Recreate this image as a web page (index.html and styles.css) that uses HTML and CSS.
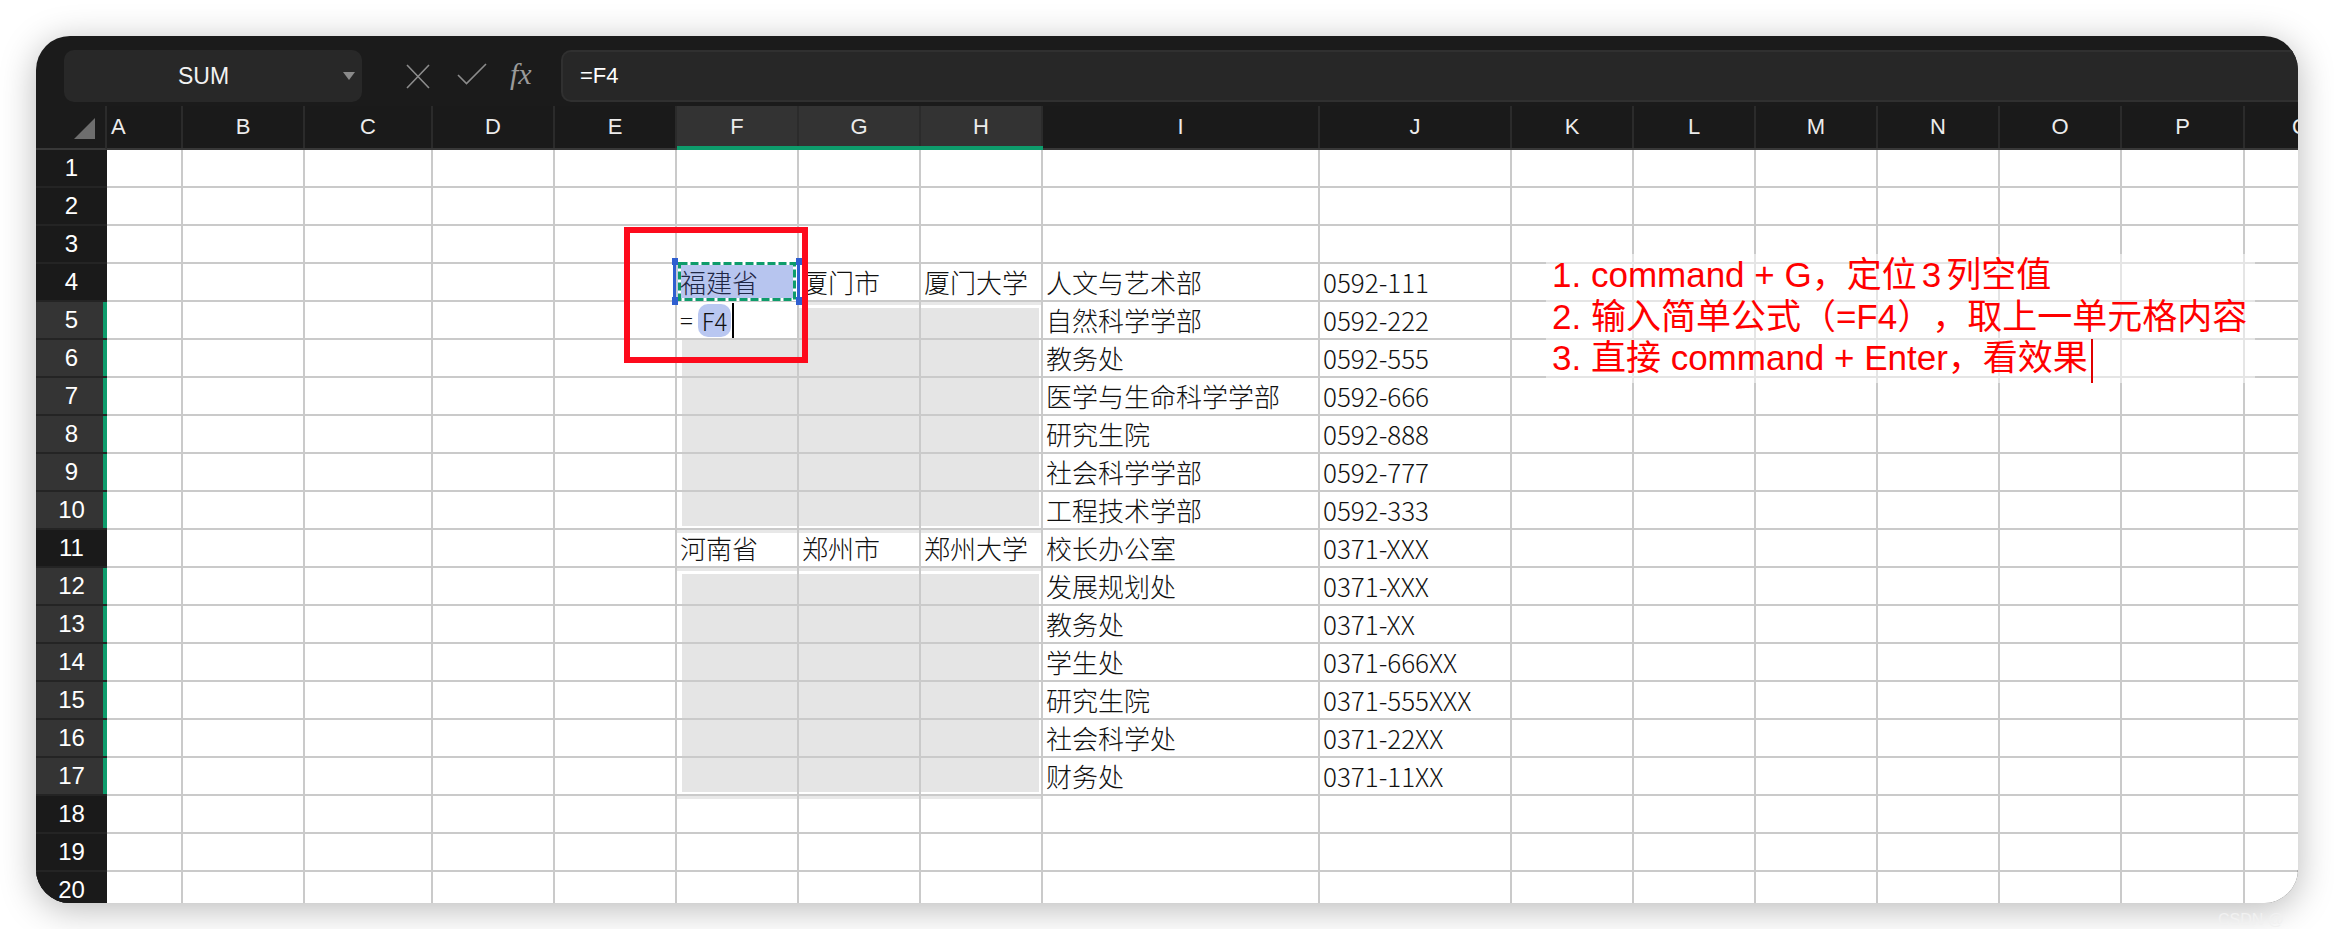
FILE: index.html
```html
<!DOCTYPE html>
<html lang="zh-CN">

<head>
    <meta charset="UTF-8">
    <meta name="viewport" content="width=device-width, initial-scale=1.0">
    <title>Sheet</title>
    <link rel="stylesheet" href="styles.css">
</head>

<body>
    <div class="window">
        <div class="toolbar">
            <div class="namebox">
                <span class="name">SUM</span>
                <span class="arrow"></span>
            </div>
            <svg class="icon-x" width="24" height="25" viewBox="0 0 24 25">
                <path d="M1 1 L23 24 M23 1 L1 24" stroke="#8c8c8c" stroke-width="1.6" fill="none" />
            </svg>
            <svg class="icon-ok" width="30" height="22" viewBox="0 0 30 22">
                <path d="M1 12 L9.5 20.5 L29 1" stroke="#8c8c8c" stroke-width="1.6" fill="none" />
            </svg>
            <span class="fx">fx</span>
            <div class="formula">=F4</div>
        </div>

        <div class="sheet">
            <div class="corner"><span class="tri"></span></div>
            <div class="colheads">
                <div class="first">A</div>
                <div>B</div>
                <div>C</div>
                <div>D</div>
                <div>E</div>
                <div class="on">F</div>
                <div class="on">G</div>
                <div class="on">H</div>
                <div>I</div>
                <div>J</div>
                <div>K</div>
                <div>L</div>
                <div>M</div>
                <div>N</div>
                <div>O</div>
                <div>P</div>
                <div class="last">Q</div>
            </div>
            <div class="rowheads">
                <div>1</div>
                <div>2</div>
                <div>3</div>
                <div>4</div>
                <div class="on">5</div>
                <div class="on">6</div>
                <div class="on">7</div>
                <div class="on">8</div>
                <div class="on">9</div>
                <div class="on">10</div>
                <div>11</div>
                <div class="on">12</div>
                <div class="on">13</div>
                <div class="on">14</div>
                <div class="on">15</div>
                <div class="on">16</div>
                <div class="on">17</div>
                <div>18</div>
                <div>19</div>
                <div>20</div>
            </div>
            <div class="cells">
                <!-- 1 -->
                <div></div><div></div><div></div><div></div><div></div><div></div><div></div><div></div><div></div><div></div><div></div><div></div><div></div><div></div><div></div><div></div><div></div>
                <!-- 2 -->
                <div></div><div></div><div></div><div></div><div></div><div></div><div></div><div></div><div></div><div></div><div></div><div></div><div></div><div></div><div></div><div></div><div></div>
                <!-- 3 -->
                <div></div><div></div><div></div><div></div><div></div><div></div><div></div><div></div><div></div><div></div><div></div><div></div><div></div><div></div><div></div><div></div><div></div>
                <!-- 4 -->
                <div></div><div></div><div></div><div></div><div></div>
                <div class="copy">
                    <svg class="ants" width="130" height="47" viewBox="0 0 130 47">
                        <rect x="5" y="5" width="118" height="37" rx="4" fill="#b7c5ef" />
                        <rect x="1" y="2" width="3" height="43" fill="#2f5fd0" />
                        <rect x="125" y="2" width="3" height="43" fill="#2f5fd0" />
                        <rect x="0" y="0" width="6" height="7" fill="#2f5fd0" />
                        <rect x="124" y="0" width="6" height="7" fill="#2f5fd0" />
                        <rect x="0" y="39" width="6" height="8" fill="#2f5fd0" />
                        <rect x="124" y="39" width="6" height="8" fill="#2f5fd0" />
                        <rect x="7.5" y="5.5" width="115" height="36" fill="none" stroke="#fff" stroke-width="3" />
                        <rect x="7.5" y="5.5" width="115" height="36" fill="none" stroke="#0e9c6b" stroke-width="3" stroke-dasharray="8 3" />
                    </svg>
                    <span>福建省</span>
                </div>
                <div>厦门市</div><div>厦门大学</div><div>人文与艺术部</div><div>0592-111</div>
                <div></div><div></div><div></div><div></div><div></div><div></div><div></div>
                <!-- 5 -->
                <div></div><div></div><div></div><div></div><div></div>
                <div class="edit">=<span class="ref">F4</span><span class="caret"></span></div>
                <div class="sel t"></div><div class="sel t r"></div><div>自然科学学部</div><div>0592-222</div>
                <div></div><div></div><div></div><div></div><div></div><div></div><div></div>
                <!-- 6 -->
                <div></div><div></div><div></div><div></div><div></div>
                <div class="sel l"></div><div class="sel"></div><div class="sel r"></div><div>教务处</div><div>0592-555</div>
                <div></div><div></div><div></div><div></div><div></div><div></div><div></div>
                <!-- 7 -->
                <div></div><div></div><div></div><div></div><div></div>
                <div class="sel l"></div><div class="sel"></div><div class="sel r"></div><div>医学与生命科学学部</div><div>0592-666</div>
                <div></div><div></div><div></div><div></div><div></div><div></div><div></div>
                <!-- 8 -->
                <div></div><div></div><div></div><div></div><div></div>
                <div class="sel l"></div><div class="sel"></div><div class="sel r"></div><div>研究生院</div><div>0592-888</div>
                <div></div><div></div><div></div><div></div><div></div><div></div><div></div>
                <!-- 9 -->
                <div></div><div></div><div></div><div></div><div></div>
                <div class="sel l"></div><div class="sel"></div><div class="sel r"></div><div>社会科学学部</div><div>0592-777</div>
                <div></div><div></div><div></div><div></div><div></div><div></div><div></div>
                <!-- 10 -->
                <div></div><div></div><div></div><div></div><div></div>
                <div class="sel l b"></div><div class="sel b"></div><div class="sel r b"></div><div>工程技术学部</div><div>0592-333</div>
                <div></div><div></div><div></div><div></div><div></div><div></div><div></div>
                <!-- 11 -->
                <div></div><div></div><div></div><div></div><div></div>
                <div class="below">河南省</div><div class="below">郑州市</div><div class="below">郑州大学</div><div>校长办公室</div><div>0371-XXX</div>
                <div></div><div></div><div></div><div></div><div></div><div></div><div></div>
                <!-- 12 -->
                <div></div><div></div><div></div><div></div><div></div>
                <div class="sel l t"></div><div class="sel t"></div><div class="sel t r"></div><div>发展规划处</div><div>0371-XXX</div>
                <div></div><div></div><div></div><div></div><div></div><div></div><div></div>
                <!-- 13 -->
                <div></div><div></div><div></div><div></div><div></div>
                <div class="sel l"></div><div class="sel"></div><div class="sel r"></div><div>教务处</div><div>0371-XX</div>
                <div></div><div></div><div></div><div></div><div></div><div></div><div></div>
                <!-- 14 -->
                <div></div><div></div><div></div><div></div><div></div>
                <div class="sel l"></div><div class="sel"></div><div class="sel r"></div><div>学生处</div><div>0371-666XX</div>
                <div></div><div></div><div></div><div></div><div></div><div></div><div></div>
                <!-- 15 -->
                <div></div><div></div><div></div><div></div><div></div>
                <div class="sel l"></div><div class="sel"></div><div class="sel r"></div><div>研究生院</div><div>0371-555XXX</div>
                <div></div><div></div><div></div><div></div><div></div><div></div><div></div>
                <!-- 16 -->
                <div></div><div></div><div></div><div></div><div></div>
                <div class="sel l"></div><div class="sel"></div><div class="sel r"></div><div>社会科学处</div><div>0371-22XX</div>
                <div></div><div></div><div></div><div></div><div></div><div></div><div></div>
                <!-- 17 -->
                <div></div><div></div><div></div><div></div><div></div>
                <div class="sel l b"></div><div class="sel b"></div><div class="sel r b"></div><div>财务处</div><div>0371-11XX</div>
                <div></div><div></div><div></div><div></div><div></div><div></div><div></div>
                <!-- 18 -->
                <div></div><div></div><div></div><div></div><div></div>
                <div class="below"></div><div class="below"></div><div class="below"></div><div></div><div></div>
                <div></div><div></div><div></div><div></div><div></div><div></div><div></div>
                <!-- 19 -->
                <div></div><div></div><div></div><div></div><div></div><div></div><div></div><div></div><div></div><div></div><div></div><div></div><div></div><div></div><div></div><div></div><div></div>
                <!-- 20 -->
                <div></div><div></div><div></div><div></div><div></div><div></div><div></div><div></div><div></div><div></div><div></div><div></div><div></div><div></div><div></div><div></div><div></div>

                <div class="redbox"></div>
                <div class="note">
                    <p>1. command + G，定位<span class="num">3</span>列空值</p>
                    <p>2. 输入简单公式（=F4），取上一单元格内容</p>
                    <p>3. 直接 command + Enter，看效果<span class="pen"></span></p>
                </div>
            </div>
        </div>
    </div>
    <div class="mark">CSDN @</div>
</body>

</html>
```

FILE: styles.css
```css
body {
    margin: 0;
    padding: 0;
    background-color: #fff;
    font-family: "Liberation Sans", "Noto Sans CJK SC", sans-serif;
    overflow: hidden;
}

.window {
    margin: 36px 36px 0;
    width: 2262px;
    height: 867px;
    border-radius: 34px;
    overflow: hidden;
    background-color: #1b1b1b;
    box-shadow: 0 6px 36px rgba(0, 0, 0, 0.28);
}

/* formula bar */
.toolbar {
    display: flex;
    align-items: center;
    height: 70px;
    padding: 14px 0 4px 28px;
    box-sizing: border-box;
}

.namebox {
    display: flex;
    align-items: center;
    width: 298px;
    height: 52px;
    margin-right: 44px;
    border-radius: 10px;
    background-color: #282828;
}

.name {
    flex: 1;
    text-align: center;
    color: #f2f2f2;
    font-size: 23px;
}

.arrow {
    width: 0;
    height: 0;
    margin-right: 7px;
    border-left: 6px solid transparent;
    border-right: 6px solid transparent;
    border-top: 8px solid #8a8a8a;
}

.icon-x {
    margin-right: 27px;
}

.icon-ok {
    margin-right: 23px;
    margin-top: -5px;
}

.fx {
    width: 28px;
    margin-right: 23px;
    margin-top: -4px;
    color: #9a9a9a;
    font-family: "Liberation Serif", serif;
    font-style: italic;
    font-size: 30px;
}

.formula {
    flex: 1;
    display: flex;
    align-items: center;
    height: 52px;
    box-sizing: border-box;
    padding-left: 17px;
    border: 2px solid #303030;
    border-right: 0;
    border-radius: 10px 0 0 10px;
    background-color: #272727;
    color: #fff;
    font-size: 22px;
}

/* sheet */
.sheet {
    display: grid;
    grid-template-columns: 71px max-content;
    grid-template-rows: 44px auto;
}

.corner {
    display: flex;
    justify-content: flex-end;
    align-items: flex-end;
    padding: 0 10px 9px 0;
    border-right: 2px solid #2b2b2b;
    border-bottom: 2px solid #383838;
}

.tri {
    width: 0;
    height: 0;
    border-left: 21px solid transparent;
    border-bottom: 21px solid #6e6e6e;
}

.colheads,
.cells {
    display: grid;
    grid-template-columns: 74px 120px 126px 120px 120px 120px 120px 120px 275px 190px 120px 120px 120px 120px 120px 121px 120px;
    column-gap: 2px;
}

.colheads {
    background-color: #2b2b2b;
    border-bottom: 2px solid #383838;
}

.colheads div {
    position: relative;
    display: flex;
    align-items: center;
    justify-content: center;
    background-color: #1a1a1a;
    color: #ececec;
    font-size: 22px;
}

.colheads .first {
    justify-content: flex-start;
    padding-left: 4px;
}

.colheads .last {
    justify-content: flex-start;
    padding-left: 47px;
}

.colheads .on {
    background-color: #333;
}

.colheads .on::after {
    content: "";
    position: absolute;
    left: 0;
    right: -2px;
    bottom: -2px;
    height: 4px;
    background-color: #0e9c6c;
}

.rowheads {
    display: flex;
    flex-direction: column;
    gap: 2px;
    background-color: #242424;
}

.rowheads div {
    flex: none;
    height: 36px;
    display: flex;
    align-items: center;
    justify-content: center;
    background-color: #1a1a1a;
    color: #fff;
    font-size: 24px;
}

.rowheads .on {
    background-color: #343434;
    box-shadow: inset -4px 0 #0e9c6c;
}

.cells {
    position: relative;
    grid-auto-rows: 36px;
    row-gap: 2px;
    background-color: #cacaca;
}

.cells > div {
    padding-left: 3px;
    background-color: #fff;
    color: #111;
    font-family: "Noto Sans CJK SC", sans-serif;
    font-weight: 300;
    font-size: 26px;
    line-height: 36px;
    white-space: nowrap;
}

/* selected range */
.cells > .sel {
    background-color: #e5e5e5;
}

.cells > .sel.l {
    box-shadow: inset 5px 0 #fff;
}

.cells > .sel.r {
    box-shadow: inset -2px 0 #fff;
}

.cells > .sel.b {
    box-shadow: inset 0 -2px #fff;
}

.cells > .sel.t {
    box-shadow: inset 0 3px #e8e8e8, inset 0 6px #fff;
}

.cells > .sel.l.t {
    box-shadow: inset 0 3px #e8e8e8, inset 0 6px #fff, inset 5px 0 #fff;
}

.cells > .sel.t.r {
    box-shadow: inset 0 3px #e8e8e8, inset 0 6px #fff, inset -2px 0 #fff;
}

.cells > .sel.l.b {
    box-shadow: inset 5px 0 #fff, inset 0 -2px #fff;
}

.cells > .sel.r.b {
    box-shadow: inset -2px 0 #fff, inset 0 -2px #fff;
}

.cells > .below {
    box-shadow: inset 0 3px #e8e8e8;
}

/* copied cell */
.cells > .copy {
    position: relative;
    color: #1f2746;
}

.ants {
    position: absolute;
    left: -5px;
    top: -6px;
}

.copy span {
    position: relative;
}

/* cell being edited */
.cells > .edit {
    display: flex;
    align-items: center;
    font-size: 24px;
}

.ref {
    margin-left: 5px;
    padding: 0 4px;
    border-radius: 10px;
    background-color: #b9c7f1;
    line-height: 33px;
}

.caret {
    width: 2px;
    height: 35px;
    margin-left: 1px;
    background-color: #000;
}

/* annotations */
.cells > .redbox {
    position: absolute;
    left: 517px;
    top: 77px;
    width: 184px;
    height: 136px;
    padding: 0;
    box-sizing: border-box;
    border: 6px solid #fd0a1c;
    background-color: transparent;
}

.cells > .note {
    position: absolute;
    left: 1439px;
    top: 104px;
    padding: 0 8px 0 6px;
    background-color: rgba(255, 255, 255, 0.5);
    color: #ff0000;
    font-family: "Liberation Sans", "Noto Sans CJK SC", sans-serif;
    font-weight: normal;
    font-size: 35px;
    line-height: 41.5px;
    text-spacing-trim: space-all;
}

.note p {
    margin: 0;
}

.num {
    margin: 0 5px;
}

.pen {
    display: inline-block;
    width: 2px;
    height: 44px;
    margin-left: 3px;
    vertical-align: middle;
    background-color: #e00000;
}

.mark {
    padding: 8px 50px 0 0;
    text-align: right;
    color: #f1f1f1;
    font-size: 16px;
}
```
